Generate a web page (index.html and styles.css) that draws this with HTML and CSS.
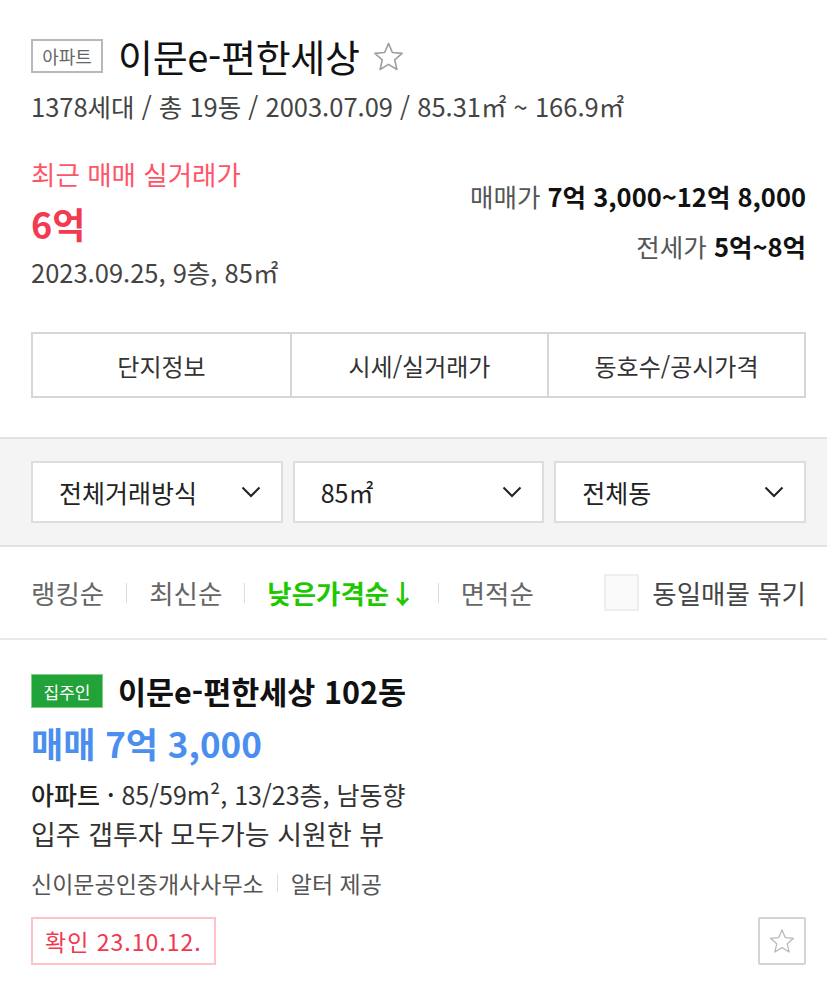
FILE: index.html
```html
<!DOCTYPE html>
<html lang="ko">
<head>
<meta charset="utf-8">
<link rel="stylesheet" href="styles.css">
</head>
<body>
<div class="page">
  <section class="summary">
    <div class="title-row">
      <span class="type-tag">아파트</span>
      <h1 class="title">이문e-편한세상</h1>
      <svg class="title-star" viewBox="0 0 24 24" width="33" height="33"><path d="M12 2.5l2.8 6.6 7.1.6-5.4 4.7 1.6 7-6.1-3.7-6.1 3.7 1.6-7-5.4-4.7 7.1-.6z" fill="none" stroke="#a0a0a0" stroke-width="1.2" stroke-linejoin="round"/></svg>
    </div>
    <p class="meta">1378세대 / 총 19동 / 2003.07.09 / 85.31㎡ ~ 166.9㎡</p>
    <div class="price-block">
      <div class="recent">
        <p class="recent-label">최근 매매 실거래가</p>
        <p class="recent-price">6억</p>
        <p class="recent-detail">2023.09.25, 9층, 85㎡</p>
      </div>
      <div class="ranges">
        <p class="range"><span class="range-label">매매가</span> <b>7억 3,000~12억 8,000</b></p>
        <p class="range"><span class="range-label">전세가</span> <b>5억~8억</b></p>
      </div>
    </div>
    <div class="tabs">
      <div class="tab">단지정보</div>
      <div class="tab">시세/실거래가</div>
      <div class="tab">동호수/공시가격</div>
    </div>
  </section>
  <section class="filters">
    <div class="select">전체거래방식<svg viewBox="0 0 20 12" width="20" height="12"><path d="M1.5 1.5L10 10l8.5-8.5" fill="none" stroke="#222" stroke-width="2"/></svg></div>
    <div class="select">85㎡<svg viewBox="0 0 20 12" width="20" height="12"><path d="M1.5 1.5L10 10l8.5-8.5" fill="none" stroke="#222" stroke-width="2"/></svg></div>
    <div class="select">전체동<svg viewBox="0 0 20 12" width="20" height="12"><path d="M1.5 1.5L10 10l8.5-8.5" fill="none" stroke="#222" stroke-width="2"/></svg></div>
  </section>
  <section class="sortbar">
    <div class="sorts">
      <span class="sort">랭킹순</span>
      <span class="sep"></span>
      <span class="sort">최신순</span>
      <span class="sep"></span>
      <span class="sort active">낮은가격순↓</span>
      <span class="sep"></span>
      <span class="sort">면적순</span>
    </div>
    <label class="group"><span class="check"></span>동일매물 묶기</label>
  </section>
  <section class="listing">
    <div class="listing-title"><span class="owner-tag">집주인</span><span class="listing-name">이문e-편한세상 102동</span></div>
    <p class="listing-price">매매 7억 3,000</p>
    <p class="listing-spec"><b>아파트 ·</b> 85/59m², 13/23층, 남동향</p>
    <p class="listing-desc">입주 갭투자 모두가능 시원한 뷰</p>
    <p class="listing-agent">신이문공인중개사사무소<span class="sep small"></span>알터 제공</p>
    <div class="listing-foot">
      <span class="confirm">확인 23.10.12.</span>
      <span class="fav"><svg viewBox="0 0 24 24" width="28" height="28"><path d="M12 2.5l2.8 6.6 7.1.6-5.4 4.7 1.6 7-6.1-3.7-6.1 3.7 1.6-7-5.4-4.7 7.1-.6z" fill="none" stroke="#b8b8b8" stroke-width="1.1" stroke-linejoin="round"/></svg></span>
    </div>
  </section>
</div>
</body>
</html>
```
FILE: styles.css
```css
* { box-sizing: border-box; }
html, body { margin: 0; padding: 0; background: #fff; }
body {
  font-family: "Noto Sans CJK KR", "Noto Sans", sans-serif;
  color: #222;
}
p { margin: 0; }
.page { width: 827px; }

.summary { padding: 39px 21px 39px 31px; }
.title-row { display: flex; align-items: center; height: 34px; }
.type-tag {
  display: inline-flex; align-items: center; justify-content: center;
  width: 72px; height: 34px;
  border: 2px solid #b8b8b8;
  font-size: 18px; color: #666;
}
.title {
  margin: 0 0 0 15px;
  font-size: 38px; font-weight: 400; color: #111;
  line-height: 34px; letter-spacing: -0.3px;
}
.title-star { margin-left: 12px; }
.meta {
  margin-top: 16px;
  font-size: 25.5px; color: #444; line-height: 34px;
}
.price-block { display: flex; justify-content: space-between; margin-top: 34px; }
.recent-label { font-size: 26.5px; color: #ff5468; line-height: 34px; }
.recent-price { margin-top: 10px; font-size: 36px; font-weight: 700; color: #f23a50; line-height: 44px; }
.recent-detail { margin-top: 10px; font-size: 25.5px; color: #444; line-height: 34px; }
.ranges { text-align: right; padding-top: 22px; }
.range { font-size: 25.5px; color: #555; line-height: 34px; margin-bottom: 16px; }
.range b { color: #111; font-weight: 700; }

.tabs {
  display: grid; grid-template-columns: 1fr 1fr 1fr;
  margin-top: 43px; border: 2px solid #d6d6d6;
  height: 66px;
}
.tab {
  display: flex; align-items: center; justify-content: center;
  font-size: 24px; color: #333;
}
.tab + .tab { border-left: 2px solid #d6d6d6; }

.filters {
  display: grid; grid-template-columns: 1fr 1fr 1fr; gap: 10px;
  background: #f4f4f4;
  border-top: 2px solid #e2e2e2; border-bottom: 2px solid #e2e2e2;
  padding: 22px 21px 22px 31px;
}
.select {
  display: flex; align-items: center; justify-content: space-between;
  height: 62px; background: #fff; border: 2px solid #dddddd;
  padding: 0 20px 0 26px;
  font-size: 25px; color: #222;
}

.sortbar {
  display: flex; justify-content: space-between; align-items: center;
  height: 93px; padding: 0 21px 0 31px;
  border-bottom: 2px solid #e8e8e8;
}
.sorts { display: flex; align-items: center; }
.sort { font-size: 26.5px; color: #666; }
.sort.active { color: #1ec800; font-weight: 700; }
.sep { display: inline-block; width: 1px; height: 20px; background: #ddd; margin: 0 22px; }
.group { display: flex; align-items: center; font-size: 26.5px; color: #444; }
.check { display: inline-block; width: 35px; height: 37px; border: 2px solid #eee; background: #fafafa; margin-right: 13px; }

.listing { padding: 34px 21px 22px 31px; }
.listing-title { display: flex; align-items: center; }
.owner-tag {
  display: inline-flex; align-items: center; justify-content: center;
  width: 72px; height: 34px; background: #22a33a; border: 1px solid #7fd07f;
  color: #fff; font-size: 17px;
}
.listing-name { margin-left: 15px; font-size: 30.5px; font-weight: 700; color: #111; line-height: 34px; }
.listing-price { margin-top: 13px; font-size: 35px; font-weight: 700; color: #4a8ff0; line-height: 44px; }
.listing-spec { margin-top: 12px; font-size: 25px; color: #333; line-height: 34px; }
.listing-spec b { font-weight: 500; color: #222; }
.listing-desc { margin-top: 6px; font-size: 27px; color: #333; line-height: 34px; }
.listing-agent { margin-top: 17px; font-size: 23px; color: #555; line-height: 30px; display: flex; align-items: center; }
.sep.small { margin: 0 13px; height: 18px; }
.listing-foot { display: flex; justify-content: space-between; align-items: center; margin-top: 19px; }
.confirm {
  display: inline-flex; align-items: center; height: 48px; padding: 0 12px;
  border: 2px solid #ffc2c8; color: #f0384f; font-size: 23px; letter-spacing: 1px;
}
.fav {
  display: inline-flex; align-items: center; justify-content: center;
  width: 48px; height: 48px; border: 2px solid #d4d4d4; border-radius: 2px;
}
```
